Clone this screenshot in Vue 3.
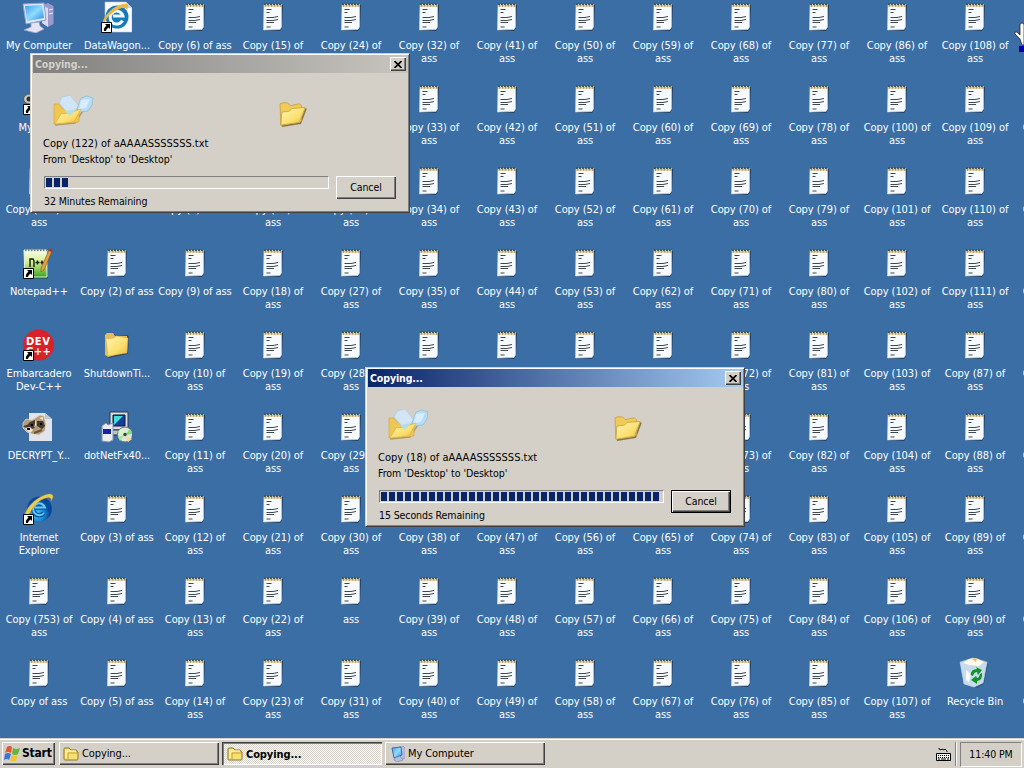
<script setup>
const note = (n) => ({ icon: 'note', label: `Copy (${n}) of ass` })
const range = (a, b) => Array.from({ length: b - a + 1 }, (_, i) => note(a + i))

const items = [
  { icon: 'computer', label: 'My Computer' },
  { icon: 'gear', label: 'My Tools', link: true },
  note(752),
  { icon: 'npp', label: 'Notepad++', link: true },
  { icon: 'dev', label: 'Embarcadero Dev-C++', link: true },
  { icon: 'raccoon', label: 'DECRYPT_Y...' },
  { icon: 'ie', label: 'Internet Explorer', link: true },
  note(753),
  { icon: 'note', label: 'Copy of ass' },
  { icon: 'iepage', label: 'DataWagon...', link: true },
  { icon: 'folder', label: 'Files' },
  { icon: 'folder', label: 'Tools' },
  note(2),
  { icon: 'folder', label: 'ShutdownTi...' },
  { icon: 'setup', label: 'dotNetFx40...' },
  ...range(3, 29),
  note(30),
  { icon: 'note', label: 'ass' },
  ...range(31, 86),
  ...range(100, 111),
  ...range(87, 90),
  { icon: 'bin', label: 'Recycle Bin' },
  { icon: 'none', label: '' },
  ...range(91, 98),
]

const dialogs = [
  { id: 'back', active: false, file: 'Copy (122) of aAAAASSSSSSS.txt', blocks: 3, left: '32 Minutes Remaining' },
  { id: 'front', active: true, file: 'Copy (18) of aAAAASSSSSSS.txt', blocks: 35, left: '15 Seconds Remaining' },
]
</script>

<template>
  <div class="screen">
    <svg class="defs" width="0" height="0">
      <defs>
        <linearGradient id="fold" x1="0" y1="0" x2="1" y2="1">
          <stop offset="0" stop-color="#fff6b4" /><stop offset=".6" stop-color="#fbdf6e" /><stop offset="1" stop-color="#e6b840" />
        </linearGradient>
        <linearGradient id="scr" x1="0" y1="0" x2="1" y2="1">
          <stop offset="0" stop-color="#3d9df0" /><stop offset=".5" stop-color="#8fdcff" /><stop offset="1" stop-color="#2b86e4" />
        </linearGradient>
        <radialGradient id="ball" cx=".4" cy=".7">
          <stop offset="0" stop-color="#55d0fb" /><stop offset=".6" stop-color="#1784cf" /><stop offset="1" stop-color="#07489b" />
        </radialGradient>
        <linearGradient id="grass" x1="0" y1="0" x2="0" y2="1">
          <stop offset="0" stop-color="#f8fff0" /><stop offset=".45" stop-color="#d5f090" /><stop offset="1" stop-color="#38a321" />
        </linearGradient>
        <symbol id="i-note" viewBox="0 0 32 32">
          <path d="M9 4H27L26 27L24 30L9 29.500Z" fill="#1c3350" opacity=".8" />
          <path d="M8 3.500H25.500V26L24 28.500L7.500 29Z" fill="#f6fafc" stroke="#d0dce6" stroke-width=".6" />
          <path d="M8 3H26" stroke="#4c5a4c" stroke-width="2" stroke-dasharray="2 1" />
          <path d="M8.500 4.800H26" stroke="#c0923c" stroke-width="1.800" stroke-dasharray="2 1" />
          <path d="M10.500 8.500H15.500M10.500 11.500H13.500M10.500 16.500H17L22 15.500M10.500 19.500H17L22 18.500M10.500 21.500H18M10.500 26H14.500" fill="none" stroke="#3f484e" stroke-width="1" />
        </symbol>
        <symbol id="i-folder" viewBox="0 0 32 32">
          <path d="M6 8L8 4L14 5L16 7L28 6L29 9L28 25L9 29L6 27Z" fill="#24374e" opacity=".65" />
          <path d="M5 6L7 4H13L15 7H27V23L8 28L5 26Z" fill="#e5bd55" />
          <path d="M6 10L14 9L16 7L28 9L27 24L8 27Z" fill="url(#fold)" stroke="#d3aa45" stroke-width=".5" />
        </symbol>
        <symbol id="i-computer" viewBox="0 0 32 32">
          <path d="M21 4L26 2L31.500 5V23L26 26L20 22Z" fill="#9b9acd" />
          <path d="M21 5L26 7V26L20 22Z" fill="#dadaf2" /><path d="M27 9L31 8M27 13L31 12" stroke="#e6e8fb" />
          <path d="M1 3L22 2L24 19L4 23Z" fill="#dce7f8" stroke="#8d9dcc" />
          <path d="M3 5L20 4L22 17L5 20Z" fill="url(#scr)" />
          <path d="M9 22L17 21L18 25L22 28L14 32L2 29L9 26Z" fill="#e5e3f4" stroke="#9e9fc9" stroke-width=".8" />
        </symbol>
        <symbol id="i-mini" viewBox="0 0 16 16">
          <path d="M10 1L14 0L16 2V12L12 14Z" fill="#b9bfdf" stroke="#7d86b2" stroke-width=".6" />
          <path d="M3 2L12 1L13 9L5 12Z" fill="url(#scr)" stroke="#446ca8" />
          <path d="M6 12L11 10L14 14L8 16L5 14Z" fill="#b6bfdb" stroke="#7b8298" stroke-width=".6" />
        </symbol>
        <symbol id="i-ie" viewBox="0 0 32 32">
          <circle cx="17.500" cy="16" r="12.500" fill="url(#ball)" />
          <path d="M22 20A6 6 0 1 1 23 14.500H13" fill="none" stroke="#0b58a6" stroke-width="4.500" />
          <path d="M22 20A6 6 0 1 1 23 14.500H13" fill="none" stroke="#69c9f0" stroke-width="2" />
          <path d="M3 28C-1 24 8 7 23 2C31 -1 33 3 29 8C30 3 25 4 19 7C10 13 8 21 3 28Z" fill="#edcc55" stroke="#ba9729" stroke-width=".5" />
        </symbol>
        <symbol id="i-iepage" viewBox="0 0 32 32">
          <path d="M5 1H26L32 7V31H5Z" fill="#fbfcff" stroke="#b8c3d7" stroke-width=".6" />
          <path d="M26 1V7H32Z" fill="#cbd6e9" />
          <circle cx="17" cy="16" r="11.500" fill="#167bbd" />
          <path d="M22.500 19.500A6.500 6.500 0 1 1 23 15H13" fill="none" stroke="#eefaff" stroke-width="3" />
          <path d="M2 23C4 14 13 5 23 3C29 2 29 6 27 9C26 5 20 7 15 10C8 15 5 19 3 25Z" fill="#edb83f" />
        </symbol>
        <symbol id="i-npp" viewBox="0 0 32 32">
          <path d="M3 4H26V31.500H3Z" fill="#245221" />
          <path d="M2 3H25V30H3Z" fill="url(#grass)" stroke="#e9f2e9" />
          <path d="M3 3H25" stroke="#75817e" stroke-width="2.500" stroke-dasharray="1.500 1.500" />
          <path d="M8 20V12H11L12 14V20M13.500 15.500H17.500M15.500 13.500V17.500M18.500 15.500H22M20 13.500V17.500" fill="none" stroke="#161d17" stroke-width="1.400" />
          <path d="M27 3L30 4L22 23L19 25L19 21Z" fill="#e5a03a" stroke="#81551c" stroke-width=".6" /><path d="M27.500 1L31 3L30 5L27 4Z" fill="#ad3430" />
        </symbol>
        <symbol id="i-dev" viewBox="0 0 32 32">
          <circle cx="16.500" cy="16" r="15.500" fill="#d8222a" />
          <text x="16" y="15.500" class="devtext" text-anchor="middle" textLength="24">DEV</text>
          <text x="16.500" y="26" class="devtext" text-anchor="middle" textLength="25">C++</text>
        </symbol>
        <symbol id="i-raccoon" viewBox="0 0 32 32">
          <path d="M7 2H23L30 8V30H7Z" fill="#e1e4ec" /><path d="M23 2V8H30Z" fill="#bfc7d3" />
          <path d="M1 12L4 8L10 9L18 4L22 5L24 13L23 20L17 24L10 23L5 21L1 17Z" fill="#b69b78" stroke="#eae2d1" stroke-width=".7" />
          <path d="M8 11L13 9L13 17L9 18L4 17L1 15L5 14Z" fill="#453b33" />
          <path d="M15 10L21 10L23 15L20 18L15 15Z" fill="#453a30" />
          <path d="M3 17L8 16L11 19L8 22L5 20ZM17 7L21 6L21 9ZM14 8L14 14L12 17Z" fill="#f0e6d3" />
          <path d="M9 14H11M18 13H20M5 18H8" stroke="#000" stroke-width="2" /><path d="M12 22L20 19" stroke="#635342" stroke-width="2" />
        </symbol>
        <symbol id="i-setup" viewBox="0 0 32 32">
          <path d="M10 1H28V19H10Z" fill="#d9dce0" stroke="#26384b" />
          <path d="M13 4H25V15H13Z" fill="#183c9c" stroke="#071940" /><path d="M14 5H23L14 14Z" fill="#42dcdb" />
          <path d="M8 19H30V24H8Z" fill="#bfc6cc" stroke="#172b42" />
          <path d="M2 15L6 12L8 14L13 12V29L9 31L2 30Z" fill="#ecedf4" stroke="#8994aa" /><path d="M3 18H11V23H3Z" fill="#1920a3" />
          <circle cx="25" cy="23.500" r="7.500" fill="#dfe8df" stroke="#667a73" />
          <path d="M25 24L18 21L21 18Z" fill="#ccffb3" /><path d="M25 24L30 18L32 23Z" fill="#82da73" /><path d="M25 24L32 28L28 31Z" fill="#f7d894" /><path d="M25 24L20 30L18 26Z" fill="#9ce89f" /><circle cx="25" cy="23.500" r="1.700" fill="#344" />
        </symbol>
        <symbol id="i-bin" viewBox="0 0 32 32">
          <path d="M5 6L30 7L26 27L19 31L10 28Z" fill="#213f5d" opacity=".5" />
          <path d="M2 5L15 1L29 5L25 26L16 30L6 27Z" fill="#c8dbe9" stroke="#a6bfd2" stroke-width=".7" />
          <path d="M5 6L11 2L18 1L26 5L21 9L11 8Z" fill="#fffae7" /><path d="M14 2L19 1L18 5Z" fill="#e9b55e" />
          <path d="M2 5L10 9L21 10L29 5L25 26L16 30L6 27Z" fill="#c5dcec" opacity=".75" />
          <path d="M8 13L13 17L11 25L8 23Z" fill="#f8fafd" />
          <path d="M12.500 18Q13 12 19 12L18 10L24 13L20 18L19 15Q16 15 15 19ZM24 16Q25 23 19 24V27L13 23L18 19L19 21Q21 21 22 17Z" fill="#129425" />
        </symbol>
        <symbol id="i-gear" viewBox="0 0 32 32">
          <ellipse cx="8" cy="16" rx="6.500" ry="5" fill="#c9c5bd" stroke="#5d594f" /><circle cx="7" cy="16" r="2.500" fill="#37332d" />
        </symbol>
        <symbol id="i-none" viewBox="0 0 32 32" />
        <symbol id="i-small" viewBox="0 0 16 16">
          <path d="M1 3Q1 2 2 2H6L8 4H13Q14 4 14 5V6H15V13Q15 14 14 14H2Q1 14 1 13Z" fill="#f8df70" stroke="#8b7428" />
          <path d="M2 5H13M3 6V12" stroke="#fffac3" /><path d="M5 13V7H15" fill="none" stroke="#bfa13e" />
        </symbol>
      </defs>
    </svg>

    <main class="desktop">
      <div v-for="(it, i) in items" :key="i" class="item">
        <div class="pic">
          <svg width="32" height="32" overflow="visible"><use :href="'#i-' + it.icon" /></svg>
          <svg v-if="it.link" class="link" viewBox="0 0 11 11">
            <path d="M.5.5H10.500V10.500H.5Z" fill="#fff" stroke="#000" />
            <path d="M4 2H9V7L7.500 5.500Q5 7 5 9H3Q2 6.500 5.500 3.500Z" fill="#000" />
          </svg>
        </div>
        <span class="label">{{ it.label }}</span>
      </div>
    </main>

    <section v-for="d in dialogs" :key="d.id" class="dialog" :class="[d.id, { active: d.active }]">
      <header>
        <b>Copying...</b>
        <button class="close"><svg width="8" height="7" viewBox="0 0 8 7"><path d="M.5 0L7.500 7M7.500 0L.5 7" stroke="#000" stroke-width="1.700" /></svg></button>
      </header>
      <div class="anim">
        <svg width="44" height="34" viewBox="0 0 44 34">
          <path d="M3 32L23 30L32 16L28 14" fill="none" stroke="#b59c5c" stroke-width="1.500" />
          <path d="M2 11H7L10 15H27V29L2 31Z" fill="#efc650" stroke="#cfa33c" stroke-width=".6" />
          <path d="M7 10L10 4L15 3L18 2L22 7L27 13L18 23L13 17Z" fill="#d1e5f6" stroke="#a9c8dd" stroke-width=".6" />
          <path d="M29 5L35 3L41 5L40 12L36 18L28 19L25 16Z" fill="#b9dcf6" stroke="#86bbd8" stroke-width=".7" />
          <path d="M29 7L38 6L34 15L27 16Z" fill="#d8edfb" />
          <path d="M3 31L9 21L17 20L29 16L22 29Z" fill="url(#fold)" stroke="#d6ad43" stroke-width=".6" />
          <path d="M13 18L24 16L18 23Z" fill="#b5dde4" />
        </svg>
        <svg width="28" height="26" viewBox="0 0 30 28">
          <path d="M3 27L23 24L29 8" fill="none" stroke="#8b7848" stroke-width="1.800" />
          <path d="M1 3L4 2H9L12 5L22 3L24 5V22L2 26Z" fill="#f0cb5a" stroke="#c79b35" stroke-width=".8" />
          <path d="M3 12L11 11L14 8L28 7L22 23L2 26Z" fill="url(#fold)" stroke="#c79b35" stroke-width=".8" />
        </svg>
      </div>
      <p class="file">{{ d.file }}</p>
      <p class="from">From 'Desktop' to 'Desktop'</p>
      <div class="row">
        <div class="progress"><i v-for="n in d.blocks" :key="n"></i></div>
        <button class="cancel">Cancel</button>
      </div>
      <p class="left">{{ d.left }}</p>
    </section>

    <svg class="cursor" width="10" height="32" viewBox="0 0 10 32">
      <path d="M6 3Q8 1 10 3V24H8L6 18L1 13Q0 10 3 11L6 14Z" fill="#fff" stroke="#111" stroke-width=".7" />
      <path d="M5 25H10V31H5Z" fill="#0000a8" />
    </svg>

    <footer class="taskbar">
      <button class="start">
        <svg width="17" height="17" viewBox="0 0 17 17">
          <path d="M3 2Q6 0 8 2L7 8Q4 6 1 8Z" fill="#e65530" /><path d="M9 3Q12 5 16 3L14 9Q11 11 8 9Z" fill="#65b536" />
          <path d="M1 9Q4 7 7 9L5 15Q3 13 0 15Z" fill="#3c75d7" /><path d="M8 10Q11 12 14 10L12 16Q9 17 6 15Z" fill="#f4c229" />
        </svg>
        <b>Start</b>
      </button>
      <div class="task"><svg width="16" height="16"><use href="#i-small" /></svg><span>Copying...</span></div>
      <div class="task pressed"><svg width="16" height="16"><use href="#i-small" /></svg><b>Copying...</b></div>
      <div class="task"><svg width="16" height="16"><use href="#i-mini" /></svg><span>My Computer</span></div>
      <svg class="keys" width="17" height="15" viewBox="0 0 17 15">
        <path d="M4 1V2L6 3L7 2L9 3L10 2L12 4V5" fill="none" stroke="#000" />
        <path d="M1.500 6.500H15.500V13.500H1.500Z" fill="#f5f3ed" stroke="#000" />
        <path d="M3 8.500H14M3 10.500H14" stroke="#000" stroke-dasharray="1 1" /><path d="M3 12H14" stroke="#000" stroke-dasharray="2 1 5 1" />
      </svg>
      <div class="sep"></div>
      <div class="clock">11:40 PM</div>
    </footer>
  </div>
</template>

<style>
body { overflow: hidden; }
</style>

<style scoped>
.screen { position: relative; width: 1024px; height: 768px; overflow: hidden; background: #3a6ea5; display: flex; flex-direction: column; font: 10.5px/13px "DejaVu Sans Condensed", "DejaVu Sans", sans-serif; font-stretch: condensed; letter-spacing: -0.1px; color: #000; }
.defs { position: absolute; }
.desktop { height: 738px; display: grid; grid-template-rows: repeat(9, 82px); grid-auto-columns: 78px; grid-auto-flow: column; justify-content: start; overflow: hidden; }
.item { width: 78px; padding-top: 1px; display: flex; flex-direction: column; align-items: center; color: #fff; }
.pic { position: relative; width: 32px; height: 32px; left: -1px; }
.pic svg { display: block; }
.pic .link { position: absolute; left: 1px; bottom: 0; width: 11px; height: 11px; }
.label { margin-top: 6px; width: 76px; text-align: center; font-size: 11px; letter-spacing: -0.07px; }
.devtext { font: bold 10px "DejaVu Sans", sans-serif; fill: #fff; letter-spacing: 0; }
.dialog { position: absolute; box-sizing: border-box; width: 380px; height: 160px; background: #d4d0c8; border: 1px solid #d4d0c8; border-right-color: #404040; border-bottom-color: #404040; box-shadow: inset 1px 1px #fff, inset -1px -1px #808080; padding: 1px 1px 2px 2px; }
.back { left: 30px; top: 53px; }
.front { left: 365px; top: 367px; }
header { height: 18px; display: flex; align-items: center; justify-content: space-between; padding: 0 2px; background: linear-gradient(90deg, #808080, #c8c5be); color: #d4d0c8; font-size: 10.5px; }
.active header { background: linear-gradient(90deg, #0a246a, #a6caf0); color: #fff; }
button { font: inherit; letter-spacing: inherit; color: #000; border: 0; padding: 0; background: #d4d0c8; box-shadow: inset 1px 1px #fff, inset -1px -1px #404040, inset -2px -2px #808080; }
.close { width: 16px; height: 14px; display: grid; place-items: center; }
.anim { display: flex; align-items: flex-end; height: 54px; margin-left: 19px; }
.anim svg + svg { margin-left: 183px; }
p { margin: 0 0 0 10px; line-height: 16px; white-space: nowrap; }
.file { margin-top: 9px; font-size: 11px; letter-spacing: 0; }
.from { letter-spacing: -0.03px; margin-top: -1px; }
.row { display: flex; gap: 7px; margin: 9px 0 0 11px; height: 23px; }
.progress { box-sizing: border-box; width: 285px; height: 13px; border: 1px solid #808080; border-right-color: #fff; border-bottom-color: #fff; padding: 1px; display: flex; gap: 2px; }
.progress i { width: 6px; height: 9px; background: #0a246a; }
.cancel { width: 60px; height: 23px; }
.active .cancel { outline: 1px solid #000; outline-offset: -1px; box-shadow: inset 2px 2px #fff, inset -2px -2px #404040, inset -3px -3px #808080; }
.left { margin: -6px 0 0 11px; width: 200px; }
.cursor { position: absolute; left: 1014px; top: 21px; }
.taskbar { height: 30px; box-sizing: border-box; background: #d4d0c8; border-top: 1px solid #d4d0c8; box-shadow: inset 0 1px #fff; padding: 3px 2px 3px 2px; display: flex; align-items: flex-start; gap: 3px; }
.start { width: 53px; height: 23px; margin-right: 1px; display: flex; align-items: center; gap: 1px; padding-left: 2px; font-size: 12px; letter-spacing: -0.2px; }
.task { box-sizing: border-box; width: 160px; height: 23px; display: flex; align-items: center; gap: 3px; padding-left: 4px; font-size: 11px; box-shadow: inset 1px 1px #fff, inset -1px -1px #404040, inset -2px -2px #808080; }
.pressed { background: repeating-conic-gradient(#fff 0 25%, #d4d0c8 0 50%) 0 0 / 2px 2px; box-shadow: inset 1px 1px #404040, inset 2px 2px #808080, inset -1px -1px #fff; padding: 1px 0 0 5px; }
.keys { margin: 5px 0 0 auto; }
.sep { width: 1px; height: 24px; background: #808080; border-right: 1px solid #fff; }
.clock { width: 60px; height: 23px; border: 1px solid #808080; border-right-color: #fff; border-bottom-color: #fff; display: grid; place-items: center; }
</style>
